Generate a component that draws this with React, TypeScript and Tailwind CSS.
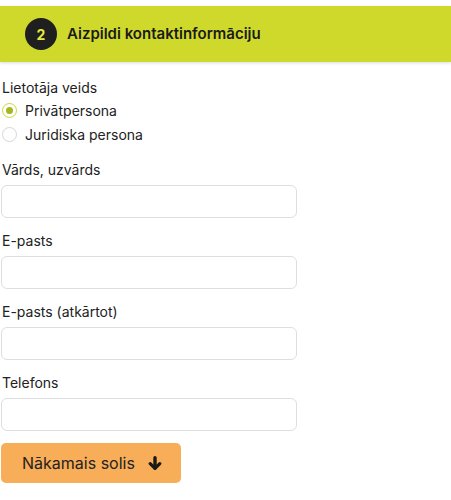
import React from "react";

function Field({ label }: { label: string }) {
  return (
    <div className="flex flex-col">
      <label className="text-[14px] leading-[18px] text-[#222] pl-[2px]">{label}</label>
      <input
        type="text"
        className="mt-[6px] w-[296px] h-[33px] ml-[1px] rounded-[6px] border border-[#dedede] bg-white outline-none"
      />
    </div>
  );
}

export default function App() {
  return (
    <div className="w-[451px] h-[500px] bg-white" style={{ fontFamily: "Inter, 'Noto Sans', sans-serif" }}>
      <div className="pt-[6px]">
        <div className="h-[56px] bg-[#cfd92c] flex items-center shadow-[0_1px_3px_rgba(0,0,0,0.15)]">
          <div className="ml-[25px] w-[32px] h-[32px] rounded-full bg-[#1f1f1f] flex items-center justify-center text-[#e5ea3a] font-bold text-[14px]">
            2
          </div>
          <div className="ml-[10px] font-semibold text-[15px] text-[#1a1a1a]">Aizpildi kontaktinformāciju</div>
        </div>
      </div>

      <div className="mt-[17px]">
        <div className="text-[14px] leading-[18px] text-[#222] pl-[2px]">Lietotāja veids</div>
        <div className="mt-[3px] flex items-center h-[20px]">
          <span className="ml-[2px] w-[15px] h-[15px] rounded-full border border-[#c9d63a] flex items-center justify-center">
            <span className="w-[7px] h-[7px] rounded-full bg-[#a7b61e]" />
          </span>
          <span className="ml-[8px] text-[14px] text-[#222]">Privātpersona</span>
        </div>
        <div className="mt-[4px] flex items-center h-[20px]">
          <span className="ml-[2px] w-[15px] h-[15px] rounded-full border border-[#d6d6d6]" />
          <span className="ml-[8px] text-[14px] text-[#222]">Juridiska persona</span>
        </div>
      </div>

      <div className="mt-[17px] flex flex-col gap-[14px]">
        <Field label="Vārds, uzvārds" />
        <Field label="E-pasts" />
        <Field label="E-pasts (atkārtot)" />
        <Field label="Telefons" />
      </div>

      <button className="mt-[12px] ml-[1px] w-[180px] h-[40px] rounded-[5px] bg-[#f8ad58] flex items-center pl-[21px] text-[16px] text-[#222]">
        Nākamais solis
        <svg className="ml-[13px]" width="14" height="15" viewBox="0 0 14 15">
          <path d="M7 1.8 V12" stroke="#1a1a1a" strokeWidth="3.4" fill="none" strokeLinecap="round" />
          <path d="M2.2 7.6 L7 12.4 L11.8 7.6" stroke="#1a1a1a" strokeWidth="3.2" fill="none" strokeLinecap="round" strokeLinejoin="round" />
        </svg>
      </button>
    </div>
  );
}
